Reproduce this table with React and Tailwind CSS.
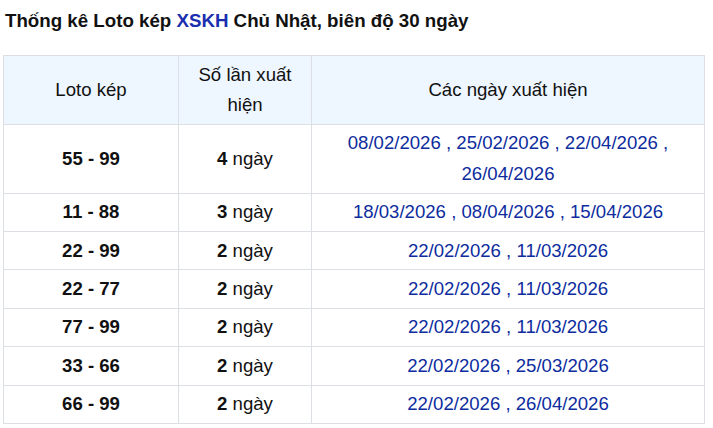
const rows = [
  { pair: '55 - 99', count: 4, dates: ['08/02/2026', '25/02/2026', '22/04/2026', '26/04/2026'] },
  { pair: '11 - 88', count: 3, dates: ['18/03/2026', '08/04/2026', '15/04/2026'] },
  { pair: '22 - 99', count: 2, dates: ['22/02/2026', '11/03/2026'] },
  { pair: '22 - 77', count: 2, dates: ['22/02/2026', '11/03/2026'] },
  { pair: '77 - 99', count: 2, dates: ['22/02/2026', '11/03/2026'] },
  { pair: '33 - 66', count: 2, dates: ['22/02/2026', '25/03/2026'] },
  { pair: '66 - 99', count: 2, dates: ['22/02/2026', '26/04/2026'] },
];

export default function App() {
  return (
    <div className="bg-white w-[713px] h-[428px] overflow-hidden font-['Liberation_Sans',Arial,sans-serif] text-[#111]">
      <h3 className="pl-[5px] pt-[9px] text-[18.72px] leading-[24px] font-bold">
        Thống kê Loto kép <span className="text-[#1a2eb0]">XSKH</span> Chủ Nhật, biên độ 30 ngày
      </h3>
      <table className="ml-[3px] mt-[22px] w-[702px] border-collapse table-fixed text-[18.6px] leading-[30.4px] text-center">
        <colgroup>
          <col className="w-[175px]" />
          <col className="w-[133px]" />
          <col />
        </colgroup>
        <thead>
          <tr className="bg-[#eef6ff]">
            <th className="border border-[#dcdfe4] font-normal px-2 py-[3.5px]">Loto kép</th>
            <th className="border border-[#dcdfe4] font-normal px-2 py-[3.5px]">Số lần xuất hiện</th>
            <th className="border border-[#dcdfe4] font-normal px-2 py-[3.5px]">Các ngày xuất hiện</th>
          </tr>
        </thead>
        <tbody>
          {rows.map((r) => (
            <tr key={r.pair}>
              <td className="border border-[#dcdfe4] font-bold px-2 py-[3.5px]">{r.pair}</td>
              <td className="border border-[#dcdfe4] px-2 py-[3.5px]">
                <b>{r.count}</b> ngày
              </td>
              <td className="border border-[#dcdfe4] px-2 py-[3.5px] text-[#0d2c9e]">
                {r.dates.join(' , ')}
              </td>
            </tr>
          ))}
        </tbody>
      </table>
    </div>
  );
}
